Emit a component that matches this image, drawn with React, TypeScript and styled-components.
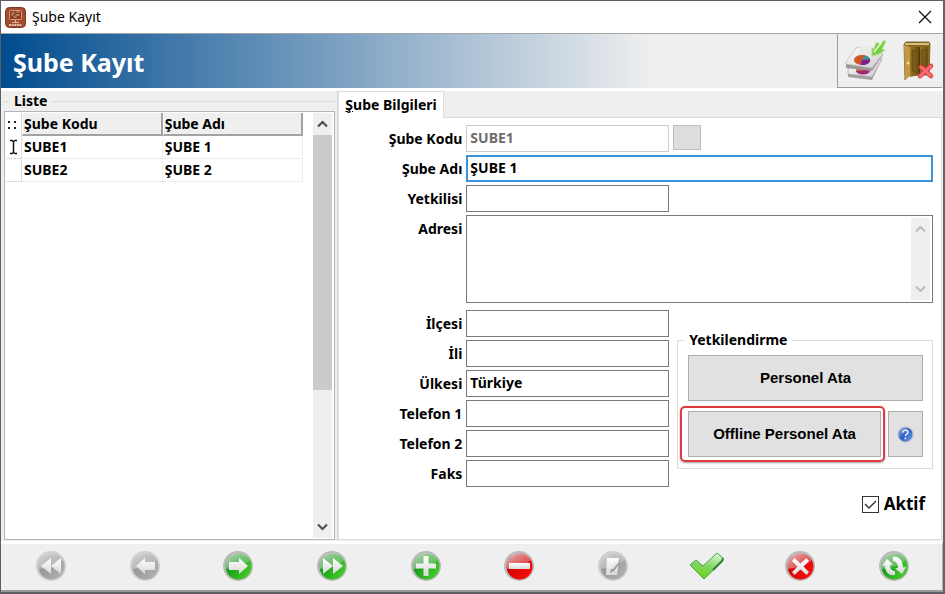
import React, { useState } from "react";
import styled, { createGlobalStyle, css } from "styled-components";

const GlobalStyle = createGlobalStyle`
  *, *::before, *::after { box-sizing: border-box; }
  body {
    margin: 0;
    background: #efefef;
    color: #000;
    font: bold 14px/20px "Noto Sans", Tahoma, sans-serif;
  }
  button, input, textarea { font: inherit; color: inherit; margin: 0; }
`;

const Window = styled.main`
  display: flex;
  flex-direction: column;
  min-height: 100vh;
  background: #efefef;
  border: 1px solid #5c5e62;
  border-right: 2px solid #62666b;
  border-bottom-width: 2px;
`;

const TitleBar = styled.header`
  display: flex;
  align-items: center;
  gap: 6px;
  height: 33px;
  padding: 0 11px 0 4px;
  background: #fff;
  border-bottom: 1px solid #a6a6a6;
`;

const WindowTitle = styled.span`
  flex: 1;
  font-weight: 400;
  font-size: 14px;
`;

const PlainButton = styled.button`
  display: grid;
  place-items: center;
  padding: 0;
  border: 0;
  background: transparent;
`;

const Banner = styled.div`
  display: flex;
  height: 57px;
  padding-right: 1px;
  border-bottom: 3px solid #fff;
  background: linear-gradient(90deg, #004c8f 0%, #6f98bd 32%, #efefef 69%);
`;

const BannerTitle = styled.h1`
  flex: 1;
  margin: 0;
  padding: 0 12px;
  font-size: 25px;
  line-height: 56px;
  color: #fff;
`;

const BannerTools = styled.div`
  display: flex;
  align-items: center;
  gap: 15px;
  padding: 0 7px 0 6px;
  border: solid #9c9c9c;
  border-width: 0 0 1px 1px;
  background: #efefef;
`;

const Body = styled.div`
  flex: 1;
  display: grid;
  grid-template-columns: minmax(240px, 337fr) minmax(0, 604fr);
`;

const ListPanel = styled.section`
  display: flex;
  flex-direction: column;
  padding: 0 2px 1px 3px;
  border-right: 1px solid #dcdcdc;
`;

const ListHeading = styled.h2`
  display: flex;
  align-items: center;
  gap: 5px;
  margin: 0;
  font-size: 14px;
  line-height: 20px;
  &::before, &::after { content: ""; height: 1px; background: #dcdcdc; }
  &::before { width: 5px; }
  &::after { flex: 1; }
`;

const ListFrame = styled.div`
  flex: 1;
  display: flex;
  justify-content: space-between;
  padding: 1px 2px 1px 1px;
  background: #fff;
  border: 1px solid #b4b4ba;
`;

const Table = styled.table`
  width: calc(100% - 29px);
  align-self: flex-start;
  table-layout: fixed;
  border-collapse: separate;
  border-spacing: 0;
`;

const cell = css`
  height: 23px;
  padding: 0 0 0 2px;
  text-align: left;
  line-height: 20px;
`;

const HeadCell = styled.th`
  ${cell}
  padding-left: 1px;
  background: #efefef;
  border: solid #a3a3a3;
  border-width: 0 2px 2px 0;
  border-left: 1px solid #fff;
`;

const CornerCell = styled.th`
  ${cell}
  width: 16px;
  padding: 0;
  border-right: 1px solid #dcdcdc;
  svg { display: block; }
`;

const Cell = styled.td`
  ${cell}
  border: solid #ececec;
  border-width: 0 1px 1px 0;
`;

const MarkerCell = styled(Cell)`
  padding: 0;
  border-color: #dcdcdc;
  svg { display: block; }
`;

const ScrollTrack = styled.div`
  display: flex;
  flex-direction: column;
  width: 19px;
  background: #efefef;
`;

const ScrollButton = styled(PlainButton)`
  height: 22px;
  width: 100%;
  flex: none;
`;

const ScrollRail = styled.div`
  flex: 1;
`;

const ScrollThumb = styled.div`
  height: 67%;
  background: #cbcbcb;
`;

const Details = styled.section`
  display: flex;
  flex-direction: column;
  padding-bottom: 1px;
`;

const Tabs = styled.div`
  display: flex;
  height: 27px;
`;

const Tab = styled.button`
  height: 27px;
  padding: 0 6px;
  border: 1px solid #dcdcdc;
  border-bottom: 0;
  background: #fff;
  line-height: 24px;
`;

const TabFiller = styled.span`
  flex: 1;
  border-bottom: 1px solid #dcdcdc;
`;

const Form = styled.form`
  flex: 1;
  padding: 7px 8px 0 0;
  margin-right: 1px;
  background: #fff;
  border: solid #dcdcdc;
  border-width: 0 1px 1px 1px;
`;

const Row = styled.div<{ $tall?: boolean }>`
  display: grid;
  grid-template-columns: 123px minmax(0, 1fr);
  gap: 4px;
  align-items: ${(p) => (p.$tall ? "start" : "center")};
  margin-bottom: ${(p) => (p.$tall ? 7 : 3)}px;
`;

const Label = styled.label`
  text-align: right;
  line-height: 27px;
`;

const TextInput = styled.input`
  width: 100%;
  height: 27px;
  padding: 0 3px 2px;
  border: 1px solid #7a7a7a;
  border-radius: 0;
  background: #fff;
  outline: 0;
  &:disabled { color: #6d6d6d; border-color: #ccc; }
`;

const FocusInput = styled(TextInput)`
  padding: 0 2px 2px;
  border: 2px solid #3a93dd;
`;

const CodeLine = styled.div`
  display: grid;
  grid-template-columns: minmax(0, 203fr) minmax(0, 264fr);
`;

const LookupButton = styled.button`
  width: 28px;
  height: 25px;
  margin-left: 4px;
  border: 1px solid #bdbdbd;
  background: #dedede;
`;

const AddressBox = styled.div`
  display: flex;
  height: 88px;
  padding: 2px;
  border: 1px solid #7a7a7a;
`;

const TextArea = styled.textarea`
  flex: 1;
  min-width: 0;
  padding: 0 1px;
  border: 0;
  outline: 0;
  resize: none;
  overflow: hidden;
`;

const Split = styled.div`
  display: grid;
  grid-template-columns: minmax(0, 330fr) minmax(0, 256fr);
  gap: 8px;
`;

const Side = styled.div`
  display: flex;
  flex-direction: column;
  padding-top: 20px;
`;

const Group = styled.fieldset`
  margin: 0;
  min-width: 0;
  padding: 5px 9px 11px 10px;
  border: 1px solid #dcdcdc;
  legend { padding: 0 5px; margin-left: -4px; line-height: 20px; }
`;

const ActionButton = styled.button`
  display: grid;
  place-items: center;
  width: 100%;
  height: 46px;
  padding: 0;
  border: 1px solid #adadad;
  background: #e1e1e1;
  font: bold 15px/20px "Liberation Sans", Arial, sans-serif;
`;

const ActionLine = styled.div`
  display: grid;
  grid-template-columns: minmax(0, 1fr) 35px;
  gap: 7px;
  margin-top: 10px;
`;

const Highlight = styled.div`
  position: relative;
  &::after {
    content: "";
    position: absolute;
    inset: -5px -4px -5px -8px;
    border: 2px solid #e03a3e;
    border-radius: 5px;
    box-shadow: 0 1px 2px #0006;
    pointer-events: none;
  }
`;

const ActiveLabel = styled.label`
  display: flex;
  align-items: center;
  align-self: flex-end;
  gap: 5px;
  margin: 23px 8px 0 0;
  font-size: 17px;
  line-height: 24px;
`;

const CheckHolder = styled.span`
  display: grid;
  > * { grid-area: 1 / 1; }
  svg { pointer-events: none; }
`;

const CheckInput = styled.input`
  appearance: none;
  width: 17px;
  height: 17px;
  border: 1px solid #333;
  background: #fff;
  & + svg { visibility: hidden; }
  &:checked + svg { visibility: visible; }
`;

const NavBar = styled.nav`
  display: grid;
  grid-template-columns: repeat(10, 1fr);
  height: 51px;
  padding: 0 1px 3px 3px;
  border-top: 3px solid #fff;
  border-bottom: 2px solid #989898;
  border-right: 1px solid #b0b0b0;
`;

const Chevron = ({ down, color = "#505050" }: { down?: boolean; color?: string }) => (
  <svg width="11" height="8" viewBox="0 0 11 8" aria-hidden="true">
    <path d={down ? "M1 1.5 5.5 6 10 1.5" : "M1 6.5 5.5 2 10 6.5"} fill="none" stroke={color} strokeWidth="2.2" />
  </svg>
);

const AppIcon = () => (
  <svg width="21" height="21" viewBox="0 0 21 21" aria-hidden="true">
    <rect x=".5" y=".5" width="20" height="20" rx="4" fill="#a34c2c" stroke="#7c3a24" />
    <rect x="4.500" y="3.500" width="12" height="9" rx="1" fill="#8b3c22" stroke="#d39c85" />
    <path d="M6.500 6h3m2-1h3m-8 3h2m2 0h4m-6 2h3M10.500 13v2M7 15.500h7" stroke="#e2b5a0" fill="none" />
    <path d="M4 18h13" stroke="#f6e4da" strokeWidth="1.600" strokeDasharray="2 .6" />
  </svg>
);

const CloseIcon = () => (
  <svg width="14" height="14" viewBox="0 0 14 14" aria-hidden="true">
    <path d="M1 1 13 13M13 1 1 13" stroke="#111" strokeWidth="1.300" />
  </svg>
);

const ReportIcon = () => (
  <svg width="42" height="42" viewBox="0 0 42 42" aria-hidden="true">
    <defs>
      <linearGradient id="paper" x2="1" y2="1">
        <stop stopColor="#fff" /><stop offset="1" stopColor="#cfcacc" />
      </linearGradient>
    </defs>
    <path d="M4 29 15 19 38 19 28 40 4 37Z" fill="#a39d9f" />
    <path d="M4 29 15 19 38 19 28 37 4 34Z" fill="url(#paper)" stroke="#aaa5a7" strokeWidth=".7" />
    <ellipse cx="19" cy="31" rx="7" ry="3.500" fill="#a32978" />
    <path d="M12 31a7 3.500 0 0 1 7-3.500V31Z" fill="#d4572a" />
    <path d="M2 23 13 8 39 15 28 31 2 28Z" fill="#9d9799" />
    <path d="M2 22 13 7 39 14 28 28 2 24Z" fill="url(#paper)" stroke="#bbb7b9" strokeWidth=".7" />
    <path d="M13 14 18 6 30 7 27 17Z" fill="#e9e9e9" />
    <ellipse cx="18" cy="20" rx="8" ry="5" fill="#cf5324" />
    <path d="M18 20 26 19a8 5 0 0 1-9.500 6Z" fill="#7d2191" />
    <path d="m18 20 3-4.600a8 5 0 0 1 5 3.600Z" fill="#2d9b9e" />
    <path d="M32 3h3v3l4-5h3l-4 8 3 1-6 4-7 2 0-8 2 1Z" fill="#76cf42" stroke="#a9dd88" />
    <path d="m38 2-8 10" stroke="#e2f8d2" strokeWidth="1.500" />
  </svg>
);

const DoorIcon = () => (
  <svg width="34" height="40" viewBox="0 0 34 40" aria-hidden="true">
    <defs>
      <linearGradient id="wood" x2="1"><stop stopColor="#a07826" /><stop offset="1" stopColor="#6b4c12" /></linearGradient>
    </defs>
    <path d="M3 3 5 1h23l1 2-1 31H9L4 39Z" fill="#8b6820" stroke="#745518" strokeWidth=".8" />
    <path d="M4 3h24" stroke="#d9c07a" strokeWidth="2" />
    <path d="M3 4 9 6v29l-5 4Z" fill="#c19a48" />
    <path d="M9 6h9v28l-9 2Z" fill="url(#wood)" />
    <path d="M19 6h8v27l-8 1Z" fill="url(#wood)" />
    <path d="M18.500 6v28" stroke="#4a340b" />
    <path d="M11 9h5v22h-5zM20 9h5v21h-5z" fill="#7d5a18" stroke="#63460f" strokeWidth=".6" />
    <circle cx="7" cy="22" r="1.500" fill="#f1dda0" />
    <path d="m20 26 10 9m0-10L19 35" stroke="#d94045" strokeWidth="4.500" strokeLinecap="round" />
    <path d="m20 26 10 9m0-10L19 35" stroke="#ff6c6e" strokeWidth="2.500" strokeLinecap="round" />
  </svg>
);

const HelpIcon = () => (
  <svg width="17" height="17" viewBox="0 0 17 17" aria-hidden="true">
    <defs>
      <linearGradient id="help" x1="0" y1="0" x2="1" y2="1">
        <stop stopColor="#a8bfeb" /><stop offset=".5" stopColor="#2d5fc4" /><stop offset="1" stopColor="#79aefa" />
      </linearGradient>
    </defs>
    <circle cx="8.500" cy="8.500" r="7.500" fill="url(#help)" stroke="#b4bccb" />
    <path d="M6 6.500c.3-3 5.500-2.800 5 0-.3 1.500-2.300 1.500-2.500 3.500m-.2 1.500v1.700" fill="none" stroke="#e8eefb" strokeWidth="1.600" />
  </svg>
);

type Tone = "gray" | "green" | "red";
const tones: Record<Tone, [string, string, string]> = {
  gray: ["#c9c9c9", "#8f8f8f", "#b5b5b5"],
  green: ["#8ccb8c", "#078d14", "#4fd62a"],
  red: ["#e58a8a", "#c80000", "#ff1010"],
};

const Orb = ({ tone, children }: { tone: Tone; children: React.ReactNode }) => (
  <svg width="32" height="32" viewBox="0 0 32 32" aria-hidden="true">
    <defs>
      <linearGradient id={`fill-${tone}`} x1="0" y1=".3" x2="1" y2="1">
        <stop stopColor={tones[tone][1]} /><stop offset="1" stopColor={tones[tone][2]} />
      </linearGradient>
      <linearGradient id={`shine-${tone}`} x2="1" y2="1">
        <stop stopColor="#e6e6e6" /><stop offset="1" stopColor={tones[tone][0]} stopOpacity=".35" />
      </linearGradient>
      <linearGradient id={`glyph-${tone}`} x2="0" y2="1">
        <stop stopColor="#fff" /><stop offset="1" stopColor="#d8d8d8" />
      </linearGradient>
    </defs>
    <circle cx="16" cy="16" r="15" fill={tone === "gray" ? "#cfcfcf" : "#bababa"} />
    <circle cx="16.500" cy="16.500" r="13" fill={`url(#fill-${tone})`} />
    <path d="M3.500 15A13 13 0 0 1 28 10Q22 17 3.500 19Z" fill={`url(#shine-${tone})`} opacity=".85" />
    <g fill={`url(#glyph-${tone})`}>{children}</g>
  </svg>
);

const CheckIcon = () => (
  <svg width="36" height="30" viewBox="0 0 36 30" aria-hidden="true">
    <defs>
      <linearGradient id="tick" x1=".6" y1="0" x2=".3" y2="1">
        <stop stopColor="#d5f4cd" /><stop offset=".5" stopColor="#7ed465" /><stop offset="1" stopColor="#6cd800" />
      </linearGradient>
    </defs>
    <path d="M1 14 7 9 14 15 28 2 34 7 34 10 15 28Z" fill="url(#tick)" stroke="#4c9f4a" strokeLinejoin="round" />
    <path d="m24 19 9-9 1-3" fill="none" stroke="#267f31" strokeWidth="1.800" />
  </svg>
);

const navItems: { label: string; icon: React.ReactNode }[] = [
  { label: "İlk kayıt", icon: <Orb tone="gray"><path d="M16 8v16L6 16Zm10 0v16L16 16Z" /></Orb> },
  { label: "Önceki kayıt", icon: <Orb tone="gray"><path d="M7 16 16 8v4h10v8H16v4Z" /></Orb> },
  { label: "Sonraki kayıt", icon: <Orb tone="green"><path d="M26 16 17 8v4H7v8h10v4Z" /></Orb> },
  { label: "Son kayıt", icon: <Orb tone="green"><path d="M7 8v16L17 16Zm10 0v16L27 16Z" /></Orb> },
  { label: "Ekle", icon: <Orb tone="green"><path d="M13.500 6h5v7.500H26v5h-7.500V26h-5v-7.500H6v-5h7.500Z" /></Orb> },
  { label: "Sil", icon: <Orb tone="red"><path d="M6 13h21v6H6Z" /></Orb> },
  {
    label: "Düzenle",
    icon: (
      <Orb tone="gray">
        <path d="M10 8h12l-2 17H9Z" />
        <path d="m22 10-8 9-1 4 4-2 7-9Z" fill="#999" />
        <path d="m22 11-7 8" stroke="#eee" strokeWidth="1.500" />
      </Orb>
    ),
  },
  { label: "Kaydet", icon: <CheckIcon /> },
  {
    label: "İptal",
    icon: (
      <Orb tone="red">
        <path d="m10.500 8 6 5.500 6-5.500 2.500 3-5.500 5.500L25 22l-2.500 3-6-5.500-6 5.500L8 22l5.500-5.500L8 11Z" />
      </Orb>
    ),
  },
  {
    label: "Yenile",
    icon: (
      <Orb tone="green">
        <path d="M9 9 4 16l3-.5C7 22 11 26 17 25v-4c-3 0-5-2-5-6l3-.5Z" />
        <path d="M24 24l4-7-3 .5C25 11 21 6 15 7v4c3 0 5 3 5 7l-3 .5Z" />
      </Orb>
    ),
  },
];

const branches = [
  { code: "SUBE1", name: "ŞUBE 1" },
  { code: "SUBE2", name: "ŞUBE 2" },
];

const contactFields = [
  { id: "ilce", label: "İlçesi", value: "" },
  { id: "il", label: "İli", value: "" },
  { id: "ulke", label: "Ülkesi", value: "Türkiye" },
  { id: "telefon1", label: "Telefon 1", value: "" },
  { id: "telefon2", label: "Telefon 2", value: "" },
  { id: "faks", label: "Faks", value: "" },
];

export default function App() {
  const [active, setActive] = useState(true);

  return (
    <>
      <GlobalStyle />
      <Window>
        <TitleBar>
          <AppIcon />
          <WindowTitle>Şube Kayıt</WindowTitle>
          <PlainButton type="button" aria-label="Kapat"><CloseIcon /></PlainButton>
        </TitleBar>
        <Banner>
          <BannerTitle>Şube Kayıt</BannerTitle>
          <BannerTools>
            <PlainButton type="button" aria-label="Rapor"><ReportIcon /></PlainButton>
            <PlainButton type="button" aria-label="Çıkış"><DoorIcon /></PlainButton>
          </BannerTools>
        </Banner>
        <Body>
          <ListPanel>
            <ListHeading>Liste</ListHeading>
            <ListFrame>
              <Table>
                <thead>
                  <tr>
                    <CornerCell aria-label="Seçim">
                      <svg width="15" height="22" viewBox="0 0 15 22" aria-hidden="true">
                        <path d="M2 7h2v2H2zM8 7h2v2H8zM2 13h2v2H2zM8 13h2v2H8z" fill="#222" />
                      </svg>
                    </CornerCell>
                    <HeadCell>Şube Kodu</HeadCell>
                    <HeadCell>Şube Adı</HeadCell>
                  </tr>
                </thead>
                <tbody>
                  {branches.map((b, i) => (
                    <tr key={b.code}>
                      <MarkerCell>
                        {i === 0 && (
                          <svg width="15" height="22" viewBox="0 0 15 22" aria-hidden="true">
                            <path d="M4 4.500h2l1.500 1L9 4.500h2M7.500 5v12M4 17.500h2l1.500-1 1.500 1h2" fill="none" stroke="#111" strokeWidth="1.500" />
                          </svg>
                        )}
                      </MarkerCell>
                      <Cell>{b.code}</Cell>
                      <Cell>{b.name}</Cell>
                    </tr>
                  ))}
                </tbody>
              </Table>
              <ScrollTrack>
                <ScrollButton type="button" aria-label="Yukarı kaydır"><Chevron /></ScrollButton>
                <ScrollRail><ScrollThumb /></ScrollRail>
                <ScrollButton type="button" aria-label="Aşağı kaydır"><Chevron down /></ScrollButton>
              </ScrollTrack>
            </ListFrame>
          </ListPanel>
          <Details>
            <Tabs role="tablist">
              <Tab type="button" role="tab" aria-selected="true"><u>Ş</u>ube Bilgileri</Tab>
              <TabFiller role="presentation" />
            </Tabs>
            <Form onSubmit={(e) => e.preventDefault()}>
              <Row>
                <Label htmlFor="kod">Şube Kodu</Label>
                <CodeLine>
                  <TextInput id="kod" defaultValue="SUBE1" disabled />
                  <LookupButton type="button" aria-label="Kod seç" />
                </CodeLine>
              </Row>
              <Row>
                <Label htmlFor="ad">Şube Adı</Label>
                <FocusInput id="ad" defaultValue="ŞUBE 1" />
              </Row>
              <Row>
                <Label htmlFor="yetkili">Yetkilisi</Label>
                <CodeLine><TextInput id="yetkili" /></CodeLine>
              </Row>
              <Row $tall>
                <Label htmlFor="adres">Adresi</Label>
                <AddressBox>
                  <TextArea id="adres" />
                  <ScrollTrack>
                    <ScrollButton type="button" aria-label="Yukarı"><Chevron color="#bdbdbd" /></ScrollButton>
                    <ScrollRail />
                    <ScrollButton type="button" aria-label="Aşağı"><Chevron down color="#bdbdbd" /></ScrollButton>
                  </ScrollTrack>
                </AddressBox>
              </Row>
              <Split>
                <div>
                  {contactFields.map((f) => (
                    <Row key={f.id}>
                      <Label htmlFor={f.id}>{f.label}</Label>
                      <TextInput id={f.id} defaultValue={f.value} />
                    </Row>
                  ))}
                </div>
                <Side>
                  <Group>
                    <legend>Yetkilendirme</legend>
                    <ActionButton type="button">Personel Ata</ActionButton>
                    <ActionLine>
                      <Highlight>
                        <ActionButton type="button">Offline Personel Ata</ActionButton>
                      </Highlight>
                      <ActionButton type="button" aria-label="Yardım"><HelpIcon /></ActionButton>
                    </ActionLine>
                  </Group>
                  <ActiveLabel>
                    <CheckHolder>
                      <CheckInput type="checkbox" checked={active} onChange={(e) => setActive(e.target.checked)} />
                      <svg width="17" height="17" viewBox="0 0 17 17" aria-hidden="true">
                        <path d="m3 8 4 4 7-7" fill="none" stroke="#333" strokeWidth="1.400" />
                      </svg>
                    </CheckHolder>
                    Aktif
                  </ActiveLabel>
                </Side>
              </Split>
            </Form>
          </Details>
        </Body>
        <NavBar aria-label="Kayıt işlemleri">
          {navItems.map((n) => (
            <PlainButton key={n.label} type="button" aria-label={n.label}>{n.icon}</PlainButton>
          ))}
        </NavBar>
      </Window>
    </>
  );
}
